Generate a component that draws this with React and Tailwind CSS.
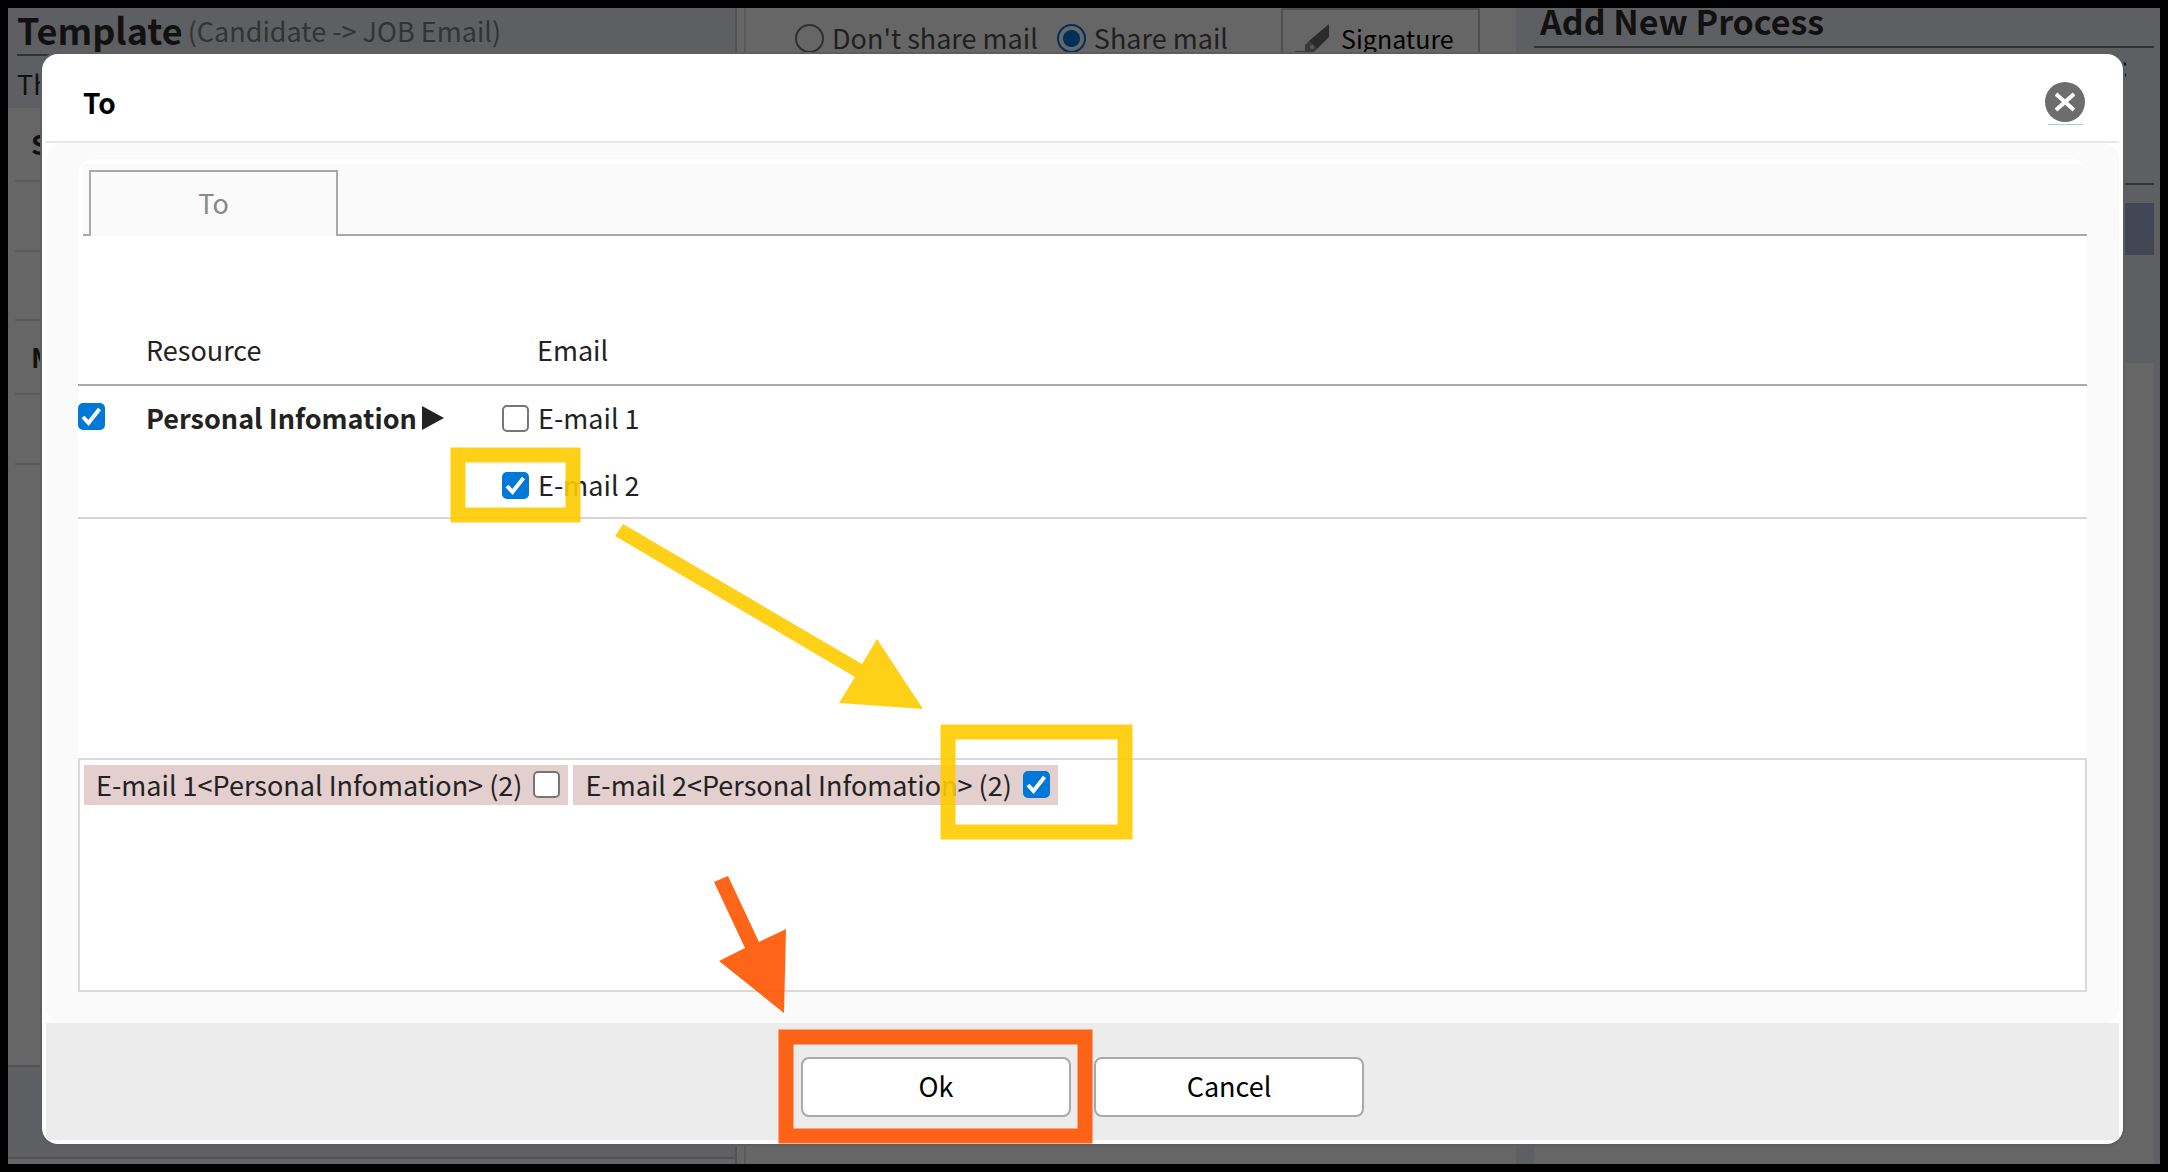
import { useState } from "react";

const SAVED_ADDRESSES = [
    { id: "email1", label: "E-mail 1", checked: false },
    { id: "email2", label: "E-mail 2", checked: true },
];

const CHECKBOX = "size-[27px] shrink-0 appearance-none rounded-[5px] border-2 border-[#767676] bg-white checked:border-[#0078d7] checked:bg-[#0078d7]";

function CheckBox({ id, label, checked, onChange }) {
    return (
        <span className="relative flex size-[27px] shrink-0">
            <input id={id} type="checkbox" aria-label={label} checked={checked} onChange={onChange} className={CHECKBOX} />
            {checked && (
                <svg viewBox="0 0 27 27" className="pointer-events-none absolute inset-0" fill="none" stroke="white" strokeWidth="4">
                    <path d="M5 14 L10.5 20 L21.5 6" />
                </svg>
            )}
        </span>
    );
}

function Radio({ id, label, checked }) {
    return (
        <div className="flex items-center gap-2">
            <input
                id={id}
                type="radio"
                name="share"
                defaultChecked={checked}
                className="size-[29px] appearance-none rounded-full border-2 border-[#303030] checked:border-[#00305a] checked:bg-[radial-gradient(circle,#00305a_8px,transparent_9px)]"
            />
            <label htmlFor={id}>{label}</label>
        </div>
    );
}

function TemplatePanel() {
    return (
        <section className="flex w-[729px] shrink-0 flex-col border-r-2 border-[#525252]">
            <div className="h-[100px] shrink-0 bg-[#5e5f63] px-[9px]">
                <h1 className="flex h-12 items-end gap-[5px] border-b-2 border-[#333] pb-[3px] text-[36px] leading-[44px] font-bold text-[#111]">
                    Template
                    <span className="text-[27px] leading-[40px] font-normal text-[#333]">(Candidate -&gt; JOB Email)</span>
                </h1>
                <p className="pt-2">Th</p>
            </div>
            <div className="flex grow flex-col pl-[7px]">
                <h2 className="h-[74px] border-b-2 border-[#5a5a5a] pt-4 pl-4 font-bold">S</h2>
                <div className="h-[70px] border-b-2 border-[#5a5a5a]" />
                <div className="h-[69px] border-b-2 border-[#5a5a5a]" />
                <h2 className="h-[74px] border-b-2 border-[#5a5a5a] pt-4 pl-4 font-bold">M</h2>
                <div className="h-[70px] border-b-2 border-[#5a5a5a]" />
            </div>
            <div className="mb-[5px] h-[94px] shrink-0 border-y-2 border-[#525252] bg-[#5e5f63]" />
        </section>
    );
}

function MailPanel() {
    return (
        <section className="ml-[7px] flex min-w-0 grow items-start border-l-2 border-[#5a5a5a] pl-[49px] text-[#1f1f1f]">
            <div className="flex h-[60px] grow items-center gap-[19px]">
                <Radio id="private" label="Don't share mail" />
                <Radio id="shared" label="Share mail" checked />
            </div>
            <button className="mr-9 flex h-[60px] w-[199px] items-center gap-[10px] border-2 border-[#4f4f4f] pl-3 text-[25px] text-black">
                <svg viewBox="0 0 36 36" className="size-9 shrink-0">
                    <path d="M34 4 V17 L22 29 L14 21 Z" fill="#2b2b2b" />
                    <path d="M14 21 L22 29 L17 34 L10 32 V25 Z" fill="#393939" />
                    <circle cx="17" cy="27" r="2" fill="#5c5c5c" />
                    <path d="M0 32 H10" stroke="#3c3c3c" strokeWidth="2" />
                </svg>
                Signature
            </button>
        </section>
    );
}

function ProcessPanel() {
    return (
        <section className="flex w-[644px] shrink-0 flex-col bg-[#5e5f63] pr-[6px] pl-[18px]">
            <h1 className="h-10 shrink-0 border-b-2 border-[#333] pl-[6px] text-[34px] leading-[26px] font-bold text-[#111]">Add New Process</h1>
            <p className="h-[137px] border-b-2 border-[#333] pr-[26px] text-right leading-[36px]">:</p>
            <div className="mt-[18px] h-[52px] bg-[#434654]" />
            <div className="mt-[108px] grow bg-[#666]" />
        </section>
    );
}

function ToDialog() {
    const [all, setAll] = useState(true);
    const [emails, setEmails] = useState(SAVED_ADDRESSES);

    function toggle(id) {
        setEmails(emails.map((email) => (email.id === id ? { ...email, checked: !email.checked } : email)));
    }

    return (
        <div role="dialog" aria-label="To" className="flex grow flex-col rounded-[18px] border-2 border-[#5e5e5e] bg-[#5e5e5e]">
            <div className="flex grow flex-col overflow-hidden rounded-2xl bg-white p-1">
                <header className="flex h-[85px] shrink-0 items-center justify-between border-b-2 border-[#e6e7e6] pt-1 pr-[34px] pl-[37px]">
                    <h2 className="text-[28px] font-bold text-black">To</h2>
                    <button aria-label="Close" className="flex flex-col items-center gap-[2px] pt-1">
                        <svg viewBox="0 0 40 40" className="size-10">
                            <circle cx="20" cy="20" r="20" fill="#6d6d6d" />
                            <path d="M11 12 L29 28 M29 12 L11 28" stroke="white" strokeWidth="4" />
                        </svg>
                        <span className="h-px w-[35px] bg-[#b5c9e0]" />
                    </button>
                </header>

                <div className="flex grow flex-col rounded-2xl bg-[#fafafa] px-8 pt-4 pb-[31px]">
                    <div className="flex grow flex-col rounded-t-2xl bg-white">
                        <div className="mt-[5px] ml-[5px] flex h-[72px] items-end bg-[#fafafa]" role="tablist">
                            <div className="w-[6px] border-b-2 border-[#a9a9a9]" />
                            <button role="tab" className="h-[66px] w-[249px] border-2 border-b-0 border-[#a9a9a9] pb-[2px] text-[#888]">To</button>
                            <div className="grow border-b-2 border-[#a9a9a9]" />
                        </div>

                        <table className="mt-[79px] w-full text-left">
                            <thead>
                                <tr className="h-[70px] border-b-2 border-[#a9a9a9]">
                                    <th className="w-[68px]" />
                                    <th className="w-[356px] font-normal">Resource</th>
                                    <th className="pl-[35px] font-normal">Email</th>
                                </tr>
                            </thead>
                            <tbody>
                                <tr className="border-b-2 border-[#d6d6d6] align-top">
                                    <td className="pt-[17px]">
                                        <CheckBox id="all" label="Personal Infomation" checked={all} onChange={() => setAll(!all)} />
                                    </td>
                                    <td className="font-bold">
                                        <label htmlFor="all" className="flex h-16 items-center gap-[5px]">
                                            Personal Infomation
                                            <svg viewBox="0 0 22 24" className="h-6 w-[22px]">
                                                <path d="M0 0 L22 12 L0 24 Z" fill="#222" />
                                            </svg>
                                        </label>
                                    </td>
                                    <td>
                                        <div className="flex flex-col gap-[3px]">
                                            {emails.map((email) => (
                                                <div key={email.id} className="flex h-16 items-center gap-[9px]">
                                                    <CheckBox id={email.id} checked={email.checked} onChange={() => toggle(email.id)} />
                                                    <label htmlFor={email.id}>{email.label}</label>
                                                </div>
                                            ))}
                                        </div>
                                    </td>
                                </tr>
                            </tbody>
                        </table>

                        <div className="mt-auto flex h-[234px] items-start gap-[5px] border-2 border-[#d9d9d9] px-1 py-[5px]">
                            {emails.map((email) => (
                                <div key={email.id} className="flex h-10 items-center gap-[11px] bg-[#e4cfcf] pr-2 pb-px pl-3">
                                    <label htmlFor={email.id + "-picked"}>{email.label}&lt;Personal Infomation&gt; (2)</label>
                                    <CheckBox id={email.id + "-picked"} checked={email.checked} onChange={() => toggle(email.id)} />
                                </div>
                            ))}
                        </div>
                    </div>
                </div>

                <footer className="flex h-[117px] shrink-0 items-center justify-center gap-[23px] bg-[#ececec] pt-[10px] text-black">
                    <button className="h-[60px] w-[270px] rounded-lg border-2 border-[#a9a9a9] bg-white pb-[2px]">Ok</button>
                    <button className="h-[60px] w-[270px] rounded-lg border-2 border-[#a9a9a9] bg-white pb-[2px]">Cancel</button>
                </footer>
            </div>
        </div>
    );
}

// Hand-drawn markers that lie over the whole page
function Annotations() {
    return (
        <svg className="pointer-events-none absolute top-0 left-0 h-[1172px] w-[2168px]" viewBox="0 0 2168 1172" opacity="0.9">
            <g fill="none" stroke="#fc0" strokeWidth="15">
                <rect x="458" y="455" width="115" height="60" />
                <rect x="948" y="732" width="177" height="100" />
            </g>
            <path d="M623 524 L862 664 L877 639 L923 709 L839 703 L855 677 L615 536 Z" fill="#fc0" />
            <rect x="786" y="1037" width="299" height="99" fill="none" stroke="#f50" strokeWidth="15" />
            <path d="M714 882 L728 876 L759 942 L786 929 L784 1013 L719 961 L745 948 Z" fill="#f50" />
        </svg>
    );
}

export default function App() {
    return (
        <div className="relative flex min-h-screen overflow-hidden border-8 border-black bg-[#666] font-['Noto_Sans_CJK_JP','Noto_Sans',sans-serif] text-[27px] leading-[40px] text-[#222]">
            <div className="flex min-w-0 grow text-[#111]">
                <TemplatePanel />
                <MailPanel />
                <ProcessPanel />
            </div>
            <div className="absolute inset-0 flex pt-11 pr-[35px] pb-[18px] pl-8">
                <ToDialog />
            </div>
            <div className="absolute -top-2 -left-2">
                <Annotations />
            </div>
        </div>
    );
}
